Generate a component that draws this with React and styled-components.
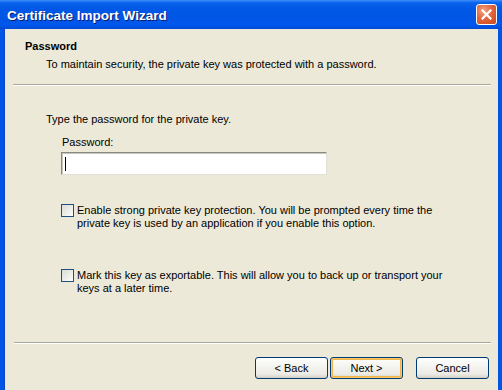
import React from "react";
import styled, { createGlobalStyle } from "styled-components";

const Global = createGlobalStyle`
  html, body { margin: 0; padding: 0; background: #ECE9D8; }
  body { width: 502px; height: 390px; overflow: hidden; }
  #root { width: 502px; height: 390px; }
`;

const UI_FONT = `"Liberation Sans", Tahoma, sans-serif`;

const Window = styled.div`
  width: 502px;
  height: 390px;
  display: flex;
  flex-direction: column;
  overflow: hidden;
  font-family: ${UI_FONT};
  font-size: 11px;
  color: #000;
`;

const TitleBar = styled.div`
  height: 29px;
  flex: none;
  display: flex;
  align-items: center;
  justify-content: space-between;
  padding: 0 5px 0 7px;
  box-sizing: border-box;
  background: linear-gradient(
    #3d8dfb 0%,
    #0a62ec 10%,
    #0058e6 30%,
    #0055e4 60%,
    #0157ec 85%,
    #0249d6 100%
  );
`;

const TitleText = styled.span`
  font-family: "Liberation Sans", "DejaVu Sans", sans-serif;
  font-weight: bold;
  font-size: 13.5px;
  color: #fff;
  text-shadow: 1px 1px 0 #0a1d6f;
  padding-top: 1px;
`;

const CloseButton = styled.div`
  width: 21px;
  height: 21px;
  box-sizing: border-box;
  border: 1px solid #fff;
  border-radius: 3px;
  background: radial-gradient(circle at 35% 30%, #f0a585 0%, #e2673f 45%, #c9441b 100%);
  display: flex;
  align-items: center;
  justify-content: center;
`;

const Body = styled.div`
  flex: 1;
  display: flex;
  flex-direction: column;
  background: #ece9d8;
  border-left: 4px solid #0055e5;
  border-right: 4px solid #0055e5;
  box-shadow: inset 1px 0 0 #0a47c4;
`;

const Header = styled.div`
  padding: 11px 0 0 21px;
  height: 55px;
  box-sizing: border-box;
  display: flex;
  flex-direction: column;
  gap: 5px;
`;

const HeaderTitle = styled.div`
  font-weight: bold;
  line-height: 13px;
`;

const HeaderSub = styled.div`
  line-height: 13px;
  padding-left: 21px;
`;

const Separator = styled.div`
  height: 1px;
  margin: 0 ${(p) => p.$right || 7}px 0 ${(p) => p.$left || 9}px;
  background: #aca899;
  border-bottom: 1px solid #fff;
  flex: none;
`;

const Content = styled.div`
  padding: 27px 0 0 42px;
  display: flex;
  flex-direction: column;
`;

const Line = styled.div`
  line-height: 13px;
  white-space: nowrap;
`;

const FieldBlock = styled.div`
  margin: 10px 0 0 15px;
  display: flex;
  flex-direction: column;
  gap: 3px;
`;

const Label = styled.div`
  line-height: 13px;
  padding-left: 1px;
`;

const TextBox = styled.div`
  width: 266px;
  height: 23px;
  box-sizing: border-box;
  background: #fff;
  border-style: solid;
  border-width: 1px;
  border-color: #8a8a82 #e2e0d6 #e2e0d6 #8a8a82;
  box-shadow: inset 1px 1px 0 #c9c7bd;
  display: flex;
  align-items: center;
  padding-left: 3px;
`;

const Caret = styled.span`
  width: 1px;
  height: 14px;
  background: #000;
`;

const CheckRow = styled.label`
  display: flex;
  align-items: flex-start;
  gap: 3px;
  margin: ${(p) => p.$top}px 0 0 15px;
`;

const CheckBox = styled.span`
  width: 13px;
  height: 13px;
  box-sizing: border-box;
  flex: none;
  border: 1px solid #1c5180;
  background: linear-gradient(135deg, #dcdcd7 0%, #f2f2ee 70%, #ffffff 100%);
`;

const CheckText = styled.div`
  display: flex;
  flex-direction: column;
`;

const Spacer = styled.div`
  flex: 1;
`;

const ButtonRow = styled.div`
  display: flex;
  justify-content: flex-end;
  padding: 13px 9px 11px 0;
  height: 46px;
  box-sizing: border-box;
  flex: none;
`;

const Button = styled.div`
  width: 73px;
  height: 22px;
  box-sizing: border-box;
  margin-left: ${(p) => p.$gap || 0}px;
  border: 1px solid #003c74;
  border-radius: 3px;
  background: linear-gradient(#ffffff 0%, #f4f4f0 40%, #ecebe6 80%, #d6d0c5 100%);
  box-shadow: ${(p) =>
    p.$default
      ? "inset 0 0 0 1px #f9c96a, inset 0 0 0 2px #f1b44a"
      : "inset 0 -1px 0 #d6d0c5"};
  display: flex;
  align-items: center;
  justify-content: center;
  line-height: 13px;
`;

export default function App() {
  return (
    <>
      <Global />
      <Window>
        <TitleBar>
          <TitleText>Certificate Import Wizard</TitleText>
          <CloseButton>
            <svg width="11" height="11" viewBox="0 0 11 11">
              <path d="M1.5 1.5 L9.5 9.5 M9.5 1.5 L1.5 9.5" stroke="#fff" strokeWidth="2.2" strokeLinecap="square" />
            </svg>
          </CloseButton>
        </TitleBar>
        <Body>
          <Header>
            <HeaderTitle>Password</HeaderTitle>
            <HeaderSub>To maintain security, the private key was protected with a password.</HeaderSub>
          </Header>
          <Separator $left={9} $right={7} />
          <Content>
            <Line>Type the password for the private key.</Line>
            <FieldBlock>
              <Label>Password:</Label>
              <TextBox>
                <Caret />
              </TextBox>
            </FieldBlock>
            <CheckRow $top={29}>
              <CheckBox />
              <CheckText>
                <Line>Enable strong private key protection. You will be prompted every time the</Line>
                <Line>private key is used by an application if you enable this option.</Line>
              </CheckText>
            </CheckRow>
            <CheckRow $top={39}>
              <CheckBox />
              <CheckText>
                <Line>Mark this key as exportable. This will allow you to back up or transport your</Line>
                <Line>keys at a later time.</Line>
              </CheckText>
            </CheckRow>
          </Content>
          <Spacer />
          <Separator $left={10} $right={7} />
          <ButtonRow>
            <Button>&lt; Back</Button>
            <Button $default $gap={2}>Next &gt;</Button>
            <Button $gap={13}>Cancel</Button>
          </ButtonRow>
        </Body>
      </Window>
    </>
  );
}
